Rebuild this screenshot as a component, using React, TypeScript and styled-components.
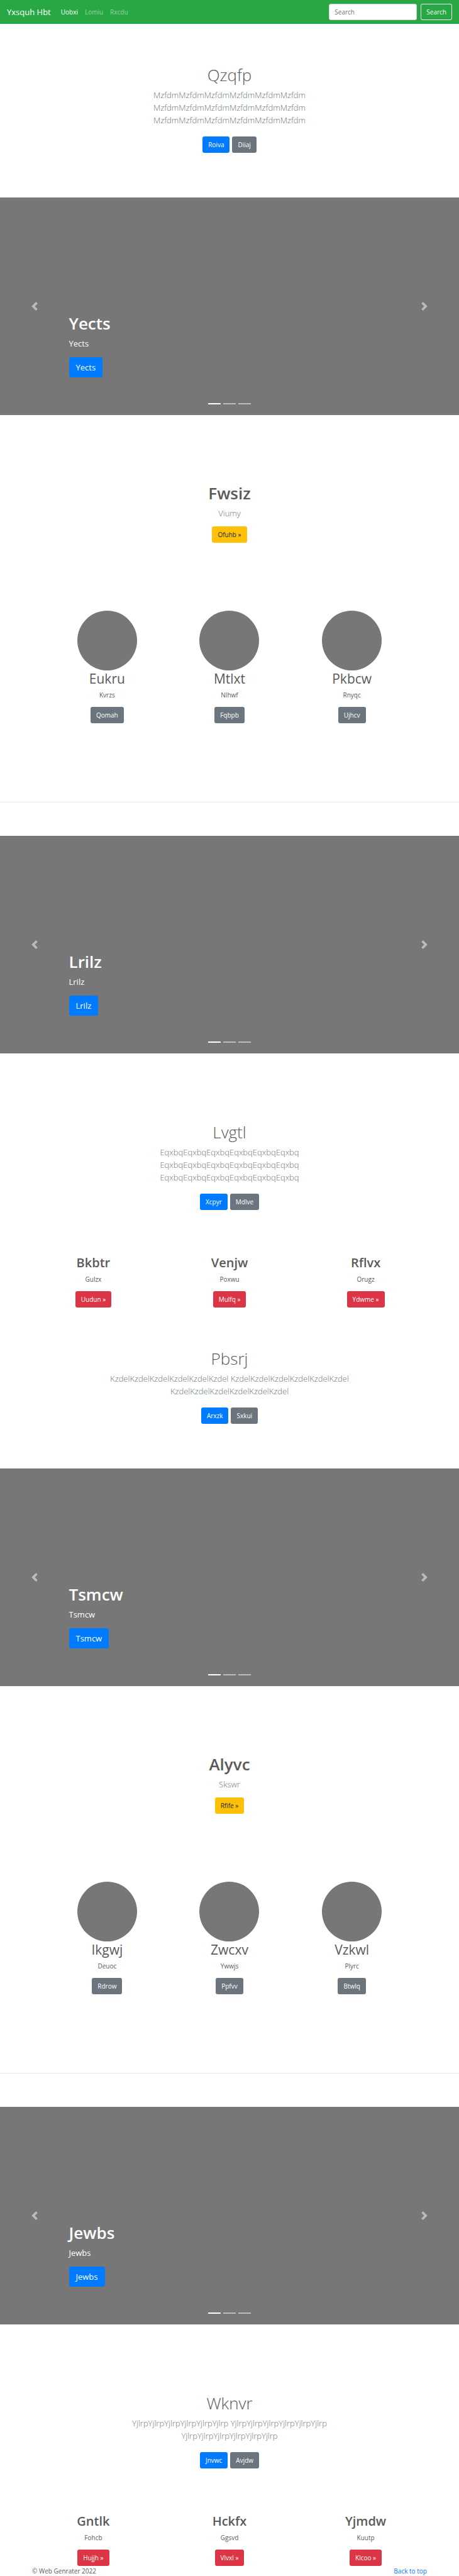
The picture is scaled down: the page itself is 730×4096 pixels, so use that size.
import React from "react";
import styled, { createGlobalStyle } from "styled-components";

type Tone = "primary" | "secondary" | "warning" | "danger";

const tones: Record<Tone, { background: string; color: string }> = {
  primary: { background: "#007bff", color: "#ffffff" },
  secondary: { background: "#6c757d", color: "#ffffff" },
  warning: { background: "#ffc107", color: "#212529" },
  danger: { background: "#dc3545", color: "#ffffff" },
};

const GlobalStyle = createGlobalStyle`
  *, *::before, *::after { box-sizing: border-box; }
  body {
    margin: 0;
    background: #ffffff;
    color: #5a5a5a;
    font-family: "Open Sans", "Noto Sans", sans-serif;
    font-size: 10px;
    line-height: 16px;
  }
  h1, h2, p { margin: 0; }
  button, input { font-family: inherit; }
`;

const Navbar = styled.nav`
  display: flex;
  align-items: center;
  height: 38px;
  padding: 0 11px;
  background: #28a745;
`;

const Brand = styled.a`
  margin-right: 16px;
  color: #ffffff;
  font-size: 13px;
  line-height: 20px;
  text-decoration: none;
`;

const NavList = styled.ul`
  display: flex;
  gap: 11px;
  flex: 1;
  margin: 0;
  padding: 0;
  list-style: none;
`;

const NavLink = styled.a<{ $active?: boolean }>`
  color: ${(p) => (p.$active ? "#ffffff" : "rgba(255, 255, 255, 0.5)")};
  text-decoration: none;
`;

const SearchForm = styled.form`
  display: flex;
  gap: 6px;
`;

const SearchInput = styled.input`
  width: 140px;
  height: 26px;
  padding: 0 8px;
  border: 1px solid #ced4da;
  border-radius: 3px;
  background: #ffffff;
  color: #495057;
  font-size: 10px;
  &::placeholder { color: #6c757d; opacity: 1; }
`;

const SearchButton = styled.button`
  height: 26px;
  padding: 0 8px;
  border: 1px solid #f8f9fa;
  border-radius: 3px;
  background: transparent;
  color: #f8f9fa;
  font-size: 10px;
`;

const Button = styled.button<{ $tone: Tone; $large?: boolean }>`
  height: ${(p) => (p.$large ? 32 : 26)}px;
  padding: 0 ${(p) => (p.$large ? 11 : 9)}px;
  border: 0;
  border-radius: 3px;
  background: ${(p) => tones[p.$tone].background};
  color: ${(p) => tones[p.$tone].color};
  font-size: ${(p) => (p.$large ? 13 : 10)}px;
  line-height: 20px;
`;

const HeroSection = styled.section<{ $spaced?: boolean }>`
  display: flex;
  flex-direction: column;
  align-items: center;
  margin-top: ${(p) => (p.$spaced ? 44 : 0)}px;
  padding: 65px 10px 71px;
  text-align: center;
`;

const HeroTitle = styled.h1`
  margin-bottom: 6px;
  font-size: 26px;
  font-weight: 300;
  line-height: 32px;
`;

const Lead = styled.p`
  max-width: 412px;
  margin-bottom: 16px;
  color: #6c757d;
  font-size: 13px;
  font-weight: 300;
  line-height: 20px;
`;

const ButtonRow = styled.div`
  display: flex;
  gap: 4px;
`;

const CarouselFrame = styled.section`
  position: relative;
  height: 346px;
  padding: 184px 15% 0;
  background: #777777;
  color: #ffffff;
`;

const SlideTitle = styled.h1`
  margin-bottom: 6px;
  font-size: 26px;
  font-weight: 600;
  line-height: 32px;
`;

const SlideText = styled.p`
  margin-bottom: 12px;
  font-size: 13px;
  line-height: 20px;
`;

const CarouselControl = styled.button<{ $side: "left" | "right" }>`
  position: absolute;
  top: 0;
  bottom: 0;
  ${(p) => p.$side}: 0;
  display: flex;
  align-items: center;
  justify-content: center;
  width: 15%;
  padding: 0;
  border: 0;
  background: transparent;
  color: #ffffff;
  opacity: 0.5;
`;

const Indicators = styled.div`
  position: absolute;
  right: 0;
  bottom: 17px;
  left: 0;
  display: flex;
  justify-content: center;
  gap: 4px;
`;

const Indicator = styled.button<{ $active?: boolean }>`
  width: 20px;
  height: 2px;
  padding: 0;
  border: 0;
  background: #ffffff;
  opacity: ${(p) => (p.$active ? 1 : 0.5)};
`;

const Feature = styled.section`
  display: flex;
  flex-direction: column;
  align-items: center;
  padding: 108px 10px;
  text-align: center;
`;

const FeatureTitle = styled.h2`
  margin-bottom: 6px;
  font-size: 26px;
  font-weight: 600;
  line-height: 32px;
`;

const FeatureText = styled.p`
  margin-bottom: 11px;
  color: #6c757d;
  font-size: 13px;
  font-weight: 300;
  line-height: 20px;
`;

const Columns = styled.section<{ $wide?: boolean }>`
  display: grid;
  grid-template-columns: repeat(3, 1fr);
  width: ${(p) => (p.$wide ? 89 : 80)}%;
  margin: 0 auto;
`;

const Column = styled.article`
  display: flex;
  flex-direction: column;
  align-items: center;
  text-align: center;
`;

const Avatar = styled.div`
  width: 95px;
  height: 95px;
  border-radius: 50%;
  background: #777777;
`;

const ColumnTitle = styled.h2<{ $bold?: boolean }>`
  margin-bottom: 5px;
  font-size: ${(p) => (p.$bold ? 20 : 21)}px;
  font-weight: ${(p) => (p.$bold ? 600 : 400)};
  line-height: 26px;
`;

const ColumnText = styled.p`
  margin-bottom: 11px;
`;

const Divider = styled.hr`
  height: 1px;
  margin: 125px 0 53px;
  border: 0;
  background: #e5e5e5;
`;

const Footer = styled.footer`
  display: flex;
  justify-content: space-between;
  padding: 0 7%;
`;

const TopLink = styled.a`
  color: #007bff;
  text-decoration: none;
`;

function Chevron({ side }: { side: "left" | "right" }) {
  return (
    <svg width="14" height="14" viewBox="0 0 8 8" fill="currentColor" aria-hidden="true">
      <path
        d={
          side === "left"
            ? "M5.25 0l-4 4 4 4 1.5-1.5L4.25 4l2.5-2.5L5.25 0z"
            : "M2.75 0l-1.5 1.5L3.75 4l-2.5 2.5L2.75 8l4-4-4-4z"
        }
      />
    </svg>
  );
}

interface HeroProps {
  title: string;
  text: string;
  actions: [string, string];
  spaced?: boolean;
}

function Hero({ title, text, actions, spaced }: HeroProps) {
  return (
    <HeroSection $spaced={spaced}>
      <HeroTitle>{title}</HeroTitle>
      <Lead>{text}</Lead>
      <ButtonRow>
        <Button $tone="primary">{actions[0]}</Button>
        <Button $tone="secondary">{actions[1]}</Button>
      </ButtonRow>
    </HeroSection>
  );
}

function Carousel({ label }: { label: string }) {
  return (
    <CarouselFrame>
      <SlideTitle>{label}</SlideTitle>
      <SlideText>{label}</SlideText>
      <Button $tone="primary" $large>{label}</Button>
      <CarouselControl $side="left" aria-label="Previous">
        <Chevron side="left" />
      </CarouselControl>
      <CarouselControl $side="right" aria-label="Next">
        <Chevron side="right" />
      </CarouselControl>
      <Indicators>
        <Indicator $active aria-label="Slide 1" />
        <Indicator aria-label="Slide 2" />
        <Indicator aria-label="Slide 3" />
      </Indicators>
    </CarouselFrame>
  );
}

type Item = [title: string, text: string, action: string];

interface ShowcaseProps {
  title: string;
  text: string;
  action: string;
  people: Item[];
}

function Showcase({ title, text, action, people }: ShowcaseProps) {
  return (
    <>
      <Feature>
        <FeatureTitle>{title}</FeatureTitle>
        <FeatureText>{text}</FeatureText>
        <Button $tone="warning">{action} »</Button>
      </Feature>
      <Columns>
        {people.map(([name, detail, label]) => (
          <Column key={name}>
            <Avatar />
            <ColumnTitle>{name}</ColumnTitle>
            <ColumnText>{detail}</ColumnText>
            <Button $tone="secondary">{label}</Button>
          </Column>
        ))}
      </Columns>
      <Divider />
    </>
  );
}

function Topics({ items }: { items: Item[] }) {
  return (
    <Columns $wide>
      {items.map(([title, text, label]) => (
        <Column key={title}>
          <ColumnTitle $bold>{title}</ColumnTitle>
          <ColumnText>{text}</ColumnText>
          <Button $tone="danger">{label} »</Button>
        </Column>
      ))}
    </Columns>
  );
}

const phrase = (word: string) => Array(3).fill(word.repeat(6)).join(" ");

export default function App() {
  return (
    <>
      <GlobalStyle />
      <header>
        <Navbar>
          <Brand href="#">Yxsquh Hbt</Brand>
          <NavList>
            <li><NavLink href="#" $active>Uobxi</NavLink></li>
            <li><NavLink href="#">Lomiu</NavLink></li>
            <li><NavLink href="#">Rxcdu</NavLink></li>
          </NavList>
          <SearchForm role="search">
            <SearchInput type="search" placeholder="Search" aria-label="Search" />
            <SearchButton type="submit">Search</SearchButton>
          </SearchForm>
        </Navbar>
      </header>
      <main>
        <Hero title="Qzqfp" text={phrase("Mzfdm")} actions={["Roiva", "Diiaj"]} />
        <Carousel label="Yects" />
        <Showcase
          title="Fwsiz"
          text="Viumy"
          action="Ofuhb"
          people={[
            ["Eukru", "Kvrzs", "Qomah"],
            ["Mtlxt", "Nlhwf", "Fqbpb"],
            ["Pkbcw", "Rnyqc", "Ujhcv"],
          ]}
        />
        <Carousel label="Lrilz" />
        <Hero spaced title="Lvgtl" text={phrase("Eqxbq")} actions={["Xcpyr", "Mdlve"]} />
        <Topics
          items={[
            ["Bkbtr", "Gulzx", "Uudun"],
            ["Venjw", "Poxwu", "Mulfq"],
            ["Rflvx", "Orugz", "Ydwme"],
          ]}
        />
        <Hero title="Pbsrj" text={phrase("Kzdel")} actions={["Arxzk", "Sxkui"]} />
        <Carousel label="Tsmcw" />
        <Showcase
          title="Alyvc"
          text="Skswr"
          action="Rfife"
          people={[
            ["Ikgwj", "Deuoc", "Rdrow"],
            ["Zwcxv", "Ywwjs", "Ppfvv"],
            ["Vzkwl", "Plyrc", "Btwlq"],
          ]}
        />
        <Carousel label="Jewbs" />
        <Hero spaced title="Wknvr" text={phrase("Yjlrp")} actions={["Jnvwc", "Avjdw"]} />
        <Topics
          items={[
            ["Gntlk", "Fohcb", "Hujjh"],
            ["Hckfx", "Ggsvd", "Vlvxl"],
            ["Yjmdw", "Kuutp", "Klcoo"],
          ]}
        />
      </main>
      <Footer>
        <p>© Web Genrater 2022</p>
        <TopLink href="#">Back to top</TopLink>
      </Footer>
    </>
  );
}
